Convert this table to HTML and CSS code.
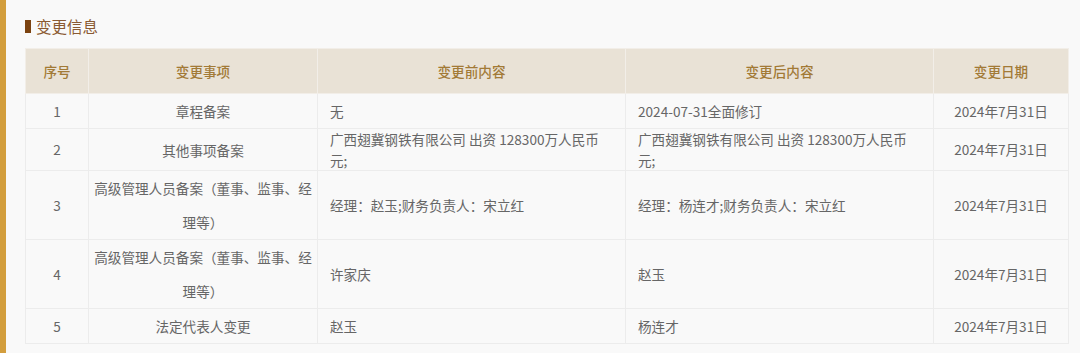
FILE: index.html
```html
<!DOCTYPE html>
<html lang="zh">
<head>
<meta charset="utf-8">
<link rel="stylesheet" href="styles.css">
</head>
<body>
<div class="page">
  <h2 class="title"><span class="mark"></span>变更信息</h2>
  <table class="grid">
    <colgroup>
      <col class="c1"><col class="c2"><col class="c3"><col class="c4"><col class="c5">
    </colgroup>
    <thead>
      <tr><th>序号</th><th>变更事项</th><th>变更前内容</th><th>变更后内容</th><th>变更日期</th></tr>
    </thead>
    <tbody>
      <tr><td class="ctr">1</td><td class="item">章程备案</td><td class="txt">无</td><td class="txt">2024-07-31全面修订</td><td class="ctr">2024年7月31日</td></tr>
      <tr><td class="ctr">2</td><td class="item">其他事项备案</td><td class="txt">广西翅冀钢铁有限公司 出资 128300万人民币元;</td><td class="txt">广西翅冀钢铁有限公司 出资 128300万人民币元;</td><td class="ctr">2024年7月31日</td></tr>
      <tr><td class="ctr">3</td><td class="item">高级管理人员备案（董事、监事、经理等）</td><td class="txt">经理：赵玉;财务负责人：宋立红</td><td class="txt">经理：杨连才;财务负责人：宋立红</td><td class="ctr">2024年7月31日</td></tr>
      <tr><td class="ctr">4</td><td class="item">高级管理人员备案（董事、监事、经理等）</td><td class="txt">许家庆</td><td class="txt">赵玉</td><td class="ctr">2024年7月31日</td></tr>
      <tr><td class="ctr">5</td><td class="item">法定代表人变更</td><td class="txt">赵玉</td><td class="txt">杨连才</td><td class="ctr">2024年7月31日</td></tr>
    </tbody>
  </table>
</div>
</body>
</html>
```

FILE: styles.css
```css
html, body {
  margin: 0;
  padding: 0;
  background: #f9f9f9;
}
body {
  font-family: "Noto Sans CJK SC", "Noto Sans", sans-serif;
  color: #666;
}
.page {
  border-left: 6px solid #d39e3d;
  min-height: 353px;
  box-sizing: border-box;
  padding: 15px 12px 0 19px;
}
.title {
  margin: 0 0 11px 0;
  display: flex;
  align-items: center;
  font-size: 15.5px;
  font-weight: normal;
  color: #8a5a32;
  height: 22px;
  line-height: 22px;
}
.mark {
  display: inline-block;
  width: 6px;
  height: 13px;
  background: #7b4210;
  margin-right: 5px;
}
.grid {
  width: 1043px;
  border-collapse: collapse;
  table-layout: fixed;
  font-size: 13.6px;
}
.c1 { width: 63px; }
.c2 { width: 229px; }
.c3 { width: 308px; }
.c4 { width: 308px; }
.c5 { width: 135px; }
.grid th {
  background: #e9e2d6;
  color: #a27a36;
  font-weight: 500;
  height: 44px;
  border: 1px solid #f2eee8;
  padding: 0;
}
.grid td {
  border: 1px solid #ececec;
  padding: 0 13px 0 12px;
  line-height: 20.5px;
  vertical-align: middle;
}
.grid td.ctr { text-align: center; padding: 0 4px; }
.grid td.item {
  text-align: center;
  line-height: 34px;
  padding: 0 4px;
}
.grid td.txt { text-align: left; }
```
